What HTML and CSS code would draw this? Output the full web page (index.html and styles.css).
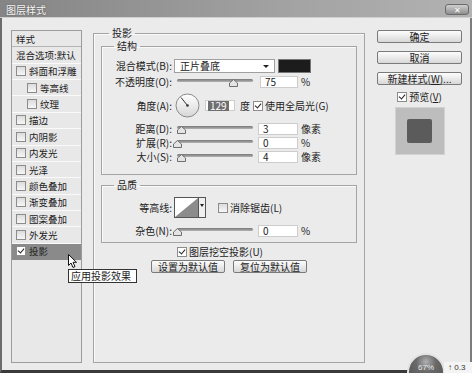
FILE: index.html
```html
<!DOCTYPE html>
<html lang="zh-CN">
<head>
    <meta charset="UTF-8">
    <meta name="viewport" content="width=device-width, initial-scale=1.0">
    <title>图层样式</title>
    <link rel="stylesheet" href="styles.css">
</head>
<body>

<div class="window">
    <div class="titlebar">
        <span class="title">图层样式</span>
        <span class="close">✕</span>
    </div>

    <div class="dialog">
        <!-- left: effect list -->
        <div class="styles-list">
            <div class="item head">样式</div>
            <div class="item">混合选项:默认</div>
            <div class="item"><span class="cb"></span>斜面和浮雕</div>
            <div class="item sub"><span class="cb"></span>等高线</div>
            <div class="item sub"><span class="cb"></span>纹理</div>
            <div class="item"><span class="cb"></span>描边</div>
            <div class="item"><span class="cb"></span>内阴影</div>
            <div class="item"><span class="cb"></span>内发光</div>
            <div class="item"><span class="cb"></span>光泽</div>
            <div class="item"><span class="cb"></span>颜色叠加</div>
            <div class="item"><span class="cb"></span>渐变叠加</div>
            <div class="item"><span class="cb"></span>图案叠加</div>
            <div class="item"><span class="cb"></span>外发光</div>
            <div class="item selected"><span class="cb on"></span>投影</div>
        </div>

        <!-- middle: drop shadow settings -->
        <fieldset class="group outer">
            <legend>投影</legend>

            <fieldset class="group inner">
                <legend>结构</legend>
                <div class="row r-blend">
                    <span class="lbl">混合模式(B):</span>
                    <div class="select">正片叠底<span class="arrow"></span></div>
                    <div class="swatch"></div>
                </div>
                <div class="row r-opacity">
                    <span class="lbl">不透明度(O):</span>
                    <div class="slider"><div class="track"></div><svg class="thumb" style="left: 52px" width="9" height="8"><path d="M4.5 0.5 L8.5 4 L8.5 7.5 L0.5 7.5 L0.5 4 Z" fill="#e4e4e4" stroke="#6e6e6e"/></svg></div>
                    <div class="field wide">75</div>
                    <span class="unit">%</span>
                </div>
                <div class="row r-angle">
                    <span class="lbl">角度(A):</span>
                    <svg class="dial" width="25" height="25">
                        <defs>
                            <linearGradient id="dialFill" x1="0" y1="0" x2="0" y2="1">
                                <stop offset="0" stop-color="#ffffff"/>
                                <stop offset="1" stop-color="#d6d6d6"/>
                            </linearGradient>
                        </defs>
                        <circle cx="12.5" cy="12.5" r="11.5" fill="url(#dialFill)" stroke="#8a8a8a"/>
                        <line x1="12.5" y1="12.5" x2="6" y2="4.5" stroke="#333" stroke-width="1"/>
                        <circle cx="12.5" cy="12.5" r="1.3" fill="#333"/>
                    </svg>
                    <div class="field angle"><span class="sel">129</span></div>
                    <span class="unit deg">度</span>
                    <span class="cb on"></span>
                    <span class="cb-text">使用全局光(G)</span>
                </div>
                <div class="row r-dist">
                    <span class="lbl">距离(D):</span>
                    <div class="slider"><div class="track"></div><svg class="thumb" style="left: 0px" width="9" height="8"><path d="M4.5 0.5 L8.5 4 L8.5 7.5 L0.5 7.5 L0.5 4 Z" fill="#e4e4e4" stroke="#6e6e6e"/></svg></div>
                    <div class="field">3</div>
                    <span class="unit">像素</span>
                </div>
                <div class="row">
                    <span class="lbl">扩展(R):</span>
                    <div class="slider"><div class="track"></div><svg class="thumb" style="left: -4px" width="9" height="8"><path d="M4.5 0.5 L8.5 4 L8.5 7.5 L0.5 7.5 L0.5 4 Z" fill="#e4e4e4" stroke="#6e6e6e"/></svg></div>
                    <div class="field">0</div>
                    <span class="unit">%</span>
                </div>
                <div class="row">
                    <span class="lbl">大小(S):</span>
                    <div class="slider"><div class="track"></div><svg class="thumb" style="left: 0px" width="9" height="8"><path d="M4.5 0.5 L8.5 4 L8.5 7.5 L0.5 7.5 L0.5 4 Z" fill="#e4e4e4" stroke="#6e6e6e"/></svg></div>
                    <div class="field">4</div>
                    <span class="unit">像素</span>
                </div>
            </fieldset>

            <fieldset class="group quality">
                <legend>品质</legend>
                <div class="row r-contour">
                    <span class="lbl">等高线:</span>
                    <div class="contour">
                        <svg width="23" height="19"><rect width="23" height="19" fill="#fff"/><polygon points="0,19 23,0 23,19" fill="#8c8c8c"/></svg>
                        <span class="contour-arrow"></span>
                    </div>
                    <span class="cb aa"></span>
                    <span class="cb-text">消除锯齿(L)</span>
                </div>
                <div class="row r-noise">
                    <span class="lbl">杂色(N):</span>
                    <div class="slider"><div class="track"></div><svg class="thumb" style="left: -4px" width="9" height="8"><path d="M4.5 0.5 L8.5 4 L8.5 7.5 L0.5 7.5 L0.5 4 Z" fill="#e4e4e4" stroke="#6e6e6e"/></svg></div>
                    <div class="field">0</div>
                    <span class="unit">%</span>
                </div>
            </fieldset>

            <div class="knockout"><span class="cb on"></span><span class="cb-text">图层挖空投影(U)</span></div>
            <div class="defaults">
                <button class="btn">设置为默认值</button>
                <button class="btn">复位为默认值</button>
            </div>
        </fieldset>

        <!-- right: dialog buttons -->
        <div class="side">
            <button class="btn side-btn">确定</button>
            <button class="btn side-btn">取消</button>
            <button class="btn side-btn">新建样式(<u>W</u>)...</button>
            <div class="preview-check"><span class="cb on"></span><span class="cb-text">预览(<u>V</u>)</span></div>
            <div class="preview"><div class="preview-inner"></div></div>
        </div>
    </div>

    <!-- hover cursor and tooltip over the list -->
    <svg class="cursor" width="10" height="15"><path d="M0.5 0.5 L0.5 11.5 L3 9 L5 13.5 L7 12.6 L5 8.3 L8.5 8.3 Z" fill="#fff" stroke="#111" stroke-width="1"/></svg>
    <div class="tooltip">应用投影效果</div>

    <!-- floating meter from another app -->
    <div class="meter"><span>67%</span></div>
    <div class="meter-strip">↑ 0.3</div>
</div>

</body>
</html>
```

FILE: styles.css
```css
body {
    margin: 0;
    background: #ffffff;
}
.window {
    position: relative;
    width: 472px;
    height: 373px;
    overflow: hidden;
    font-family: "Noto Sans CJK SC", "Liberation Sans", sans-serif;
    font-size: 10px;
    line-height: 12px;
    color: #222;
}
u {
    text-decoration: underline;
}

/* title bar */
.titlebar {
    display: flex;
    justify-content: space-between;
    align-items: flex-start;
    height: 17px;
    border-bottom: 1px solid #cfcfcf;
    background: linear-gradient(to right, #858585, #a2a2a2 60%, #b2b2b2);
}
.title {
    margin: 4px 0 0 6px;
    color: #f6f6f6;
    text-shadow: 0 0 2px #555;
}
.close {
    width: 24px;
    height: 11px;
    margin: 4px 3px 0 0;
    box-sizing: border-box;
    border: 1px solid #6a6a6a;
    border-radius: 3px;
    background: linear-gradient(#cfcfcf, #8e8e8e);
    color: #fff;
    font-size: 8px;
    line-height: 9px;
    text-align: center;
}

/* dialog body */
.dialog {
    display: flex;
    align-items: flex-start;
    height: 355px;
    box-sizing: border-box;
    padding: 9px 0 0 9px;
    background: #ebebeb;
    border-left: 2px solid #6c6c6c;
    border-right: 2px solid #7c7c7c;
    border-bottom: 3px solid #3a3a3a;
}

/* style list */
.styles-list {
    width: 71px;
    height: 333px;
    margin-top: 3px;
    box-sizing: border-box;
    border: 1px solid #9c9c9c;
    background: #e8e8e8;
}
.item {
    display: flex;
    align-items: center;
    height: 16.36px;
    box-sizing: border-box;
    padding-left: 4px;
    border-bottom: 1px solid #fafafa;
    white-space: nowrap;
    font-size: 9.5px;
}
.item.head {
    border-bottom-color: #b4b4b4;
}
.item.sub {
    padding-left: 15px;
}
.item.selected {
    background: #8a8a8a;
    border-bottom-color: #8a8a8a;
}
.item .cb {
    margin-right: 3px;
}

/* checkboxes */
.cb {
    position: relative;
    display: inline-block;
    flex: none;
    width: 8px;
    height: 8px;
    border: 1px solid #8c8c8c;
    background: linear-gradient(#dcdcdc, #f6f6f6);
}
.cb.on {
    background: #fff;
}
.cb.on::after {
    content: "";
    position: absolute;
    left: 2px;
    top: 0px;
    width: 3px;
    height: 5px;
    border: solid #222;
    border-width: 0 1.5px 1.5px 0;
    transform: rotate(40deg);
}
.cb-text {
    margin-left: 2px;
    white-space: nowrap;
}

/* group boxes */
.group {
    margin: 0;
    min-width: 0;
    border: 1px solid #a4a4a4;
    box-shadow: inset 1px 1px 0 #fafafa;
}
.group legend {
    padding: 0 3px;
    line-height: 12px;
}
.outer {
    width: 272px;
    height: 336px;
    box-sizing: border-box;
    margin-left: 11px;
    padding: 1px 7px 0 7px;
}
.outer > legend {
    margin-left: 8px;
}
.inner, .quality {
    padding: 0 0 11px 0;
}
.inner > legend, .quality > legend {
    margin-left: 12px;
}
.quality {
    margin-top: 4px;
    padding-bottom: 5px;
}

/* rows */
.row {
    display: flex;
    align-items: center;
    height: 13px;
    margin-top: 1px;
}
.r-blend {
    height: 14px;
    margin-top: 7px;
}
.r-opacity {
    margin-top: 2px;
}
.r-angle {
    height: 25px;
    margin-top: 5px;
}
.r-dist {
    margin-top: 4px;
}
.r-contour {
    height: 21px;
    margin-top: 6px;
}
.r-noise {
    margin-top: 6px;
}
.lbl {
    width: 70px;
    margin-right: 2px;
    text-align: right;
    white-space: nowrap;
}

.select {
    position: relative;
    width: 101px;
    height: 14px;
    box-sizing: border-box;
    padding-left: 5px;
    border: 1px solid #a0a0a0;
    background: #fff;
}
.arrow {
    position: absolute;
    right: 5px;
    top: 5px;
    border-left: 3px solid transparent;
    border-right: 3px solid transparent;
    border-top: 3px solid #222;
}
.swatch {
    width: 33px;
    height: 14px;
    margin-left: 3px;
    box-sizing: border-box;
    border: 1px solid #777;
    background: #1c1c1c;
}

.slider {
    position: relative;
    width: 76px;
    height: 13px;
    margin-left: 3px;
}
.track {
    height: 3px;
    margin-top: 4px;
    border-radius: 2px;
    background: linear-gradient(#777, #b4b4b4);
}
.thumb {
    position: absolute;
    top: 4px;
}

.field {
    width: 40px;
    height: 12px;
    margin-left: 5px;
    box-sizing: border-box;
    padding-left: 4px;
    border: 1px solid #cdcdcd;
    background: #fff;
    line-height: 10px;
}
.field.wide {
    margin-left: 7px;
    width: 38px;
}
.field.angle {
    width: 30px;
    height: 11px;
    padding-left: 2px;
}
.sel {
    display: inline-block;
    padding: 0 2px;
    background: #6e6e6e;
    color: #fff;
}
.unit {
    margin-left: 3px;
}
.unit.deg {
    margin-left: 5px;
    margin-right: 3px;
}
.dial {
    margin-left: 1px;
}

.contour {
    display: flex;
    width: 32px;
    height: 21px;
    box-sizing: border-box;
    border: 1px solid #555;
    background: #fff;
}
.contour svg {
    display: block;
}
.contour-arrow {
    position: relative;
    flex: 1;
    border-left: 1px solid #555;
    background: #f0f0f0;
}
.contour-arrow::after {
    content: "";
    position: absolute;
    left: 1px;
    top: 6px;
    border-left: 2px solid transparent;
    border-right: 2px solid transparent;
    border-top: 3px solid #222;
}
.cb.aa {
    margin-left: 12px;
}

.knockout {
    display: flex;
    align-items: center;
    height: 10px;
    margin: 4px 0 0 76px;
}
.defaults {
    display: flex;
    justify-content: center;
    gap: 8px;
    margin-top: 3px;
}

/* buttons */
.btn {
    width: 74px;
    height: 13px;
    padding: 0;
    box-sizing: border-box;
    border: 1px solid #7a7a7a;
    border-radius: 2px;
    background: linear-gradient(#fdfdfd, #d8d8d8);
    font-family: inherit;
    font-size: 10px;
    line-height: 11px;
    color: #222;
}

.side {
    display: flex;
    flex-direction: column;
    align-items: center;
    width: 85px;
    margin: 3px 0 0 12px;
}
.side-btn {
    width: 85px;
    margin-bottom: 8px;
}
.preview-check {
    display: flex;
    align-items: center;
    height: 10px;
    margin-top: -1px;
}
.preview {
    display: flex;
    align-items: center;
    justify-content: center;
    width: 50px;
    height: 48px;
    margin-top: 5px;
    box-sizing: border-box;
    border: 1px solid #d2d2d2;
    background: #bdbdbd;
}
.preview-inner {
    width: 25px;
    height: 24px;
    border-radius: 2px;
    background: #5b5b5b;
}

/* overlays */
.cursor {
    position: absolute;
    left: 68px;
    top: 254px;
}
.tooltip {
    position: absolute;
    left: 68px;
    top: 269px;
    width: 69px;
    height: 14px;
    box-sizing: border-box;
    padding-left: 2px;
    border: 1px solid #333;
    background: #fff;
    white-space: nowrap;
}
.meter {
    position: absolute;
    left: 407px;
    top: 353px;
    width: 38px;
    height: 38px;
    box-sizing: border-box;
    border: 2px solid #e2e2e2;
    border-radius: 50%;
    background: radial-gradient(circle at 50% 20%, #b0b0b0 0, #6a6a6a 30%, #575757 70%);
    text-align: center;
}
.meter span {
    display: block;
    margin-top: 9px;
    font-family: "Liberation Sans", sans-serif;
    font-size: 8px;
    line-height: 8px;
    color: #e8e8e8;
}
.meter-strip {
    position: absolute;
    left: 444px;
    top: 362px;
    width: 28px;
    height: 11px;
    background: #f4f4f4;
    font-family: "Liberation Sans", sans-serif;
    font-size: 8px;
    line-height: 11px;
    color: #333;
    padding-left: 4px;
    box-sizing: border-box;
    white-space: nowrap;
}
```
